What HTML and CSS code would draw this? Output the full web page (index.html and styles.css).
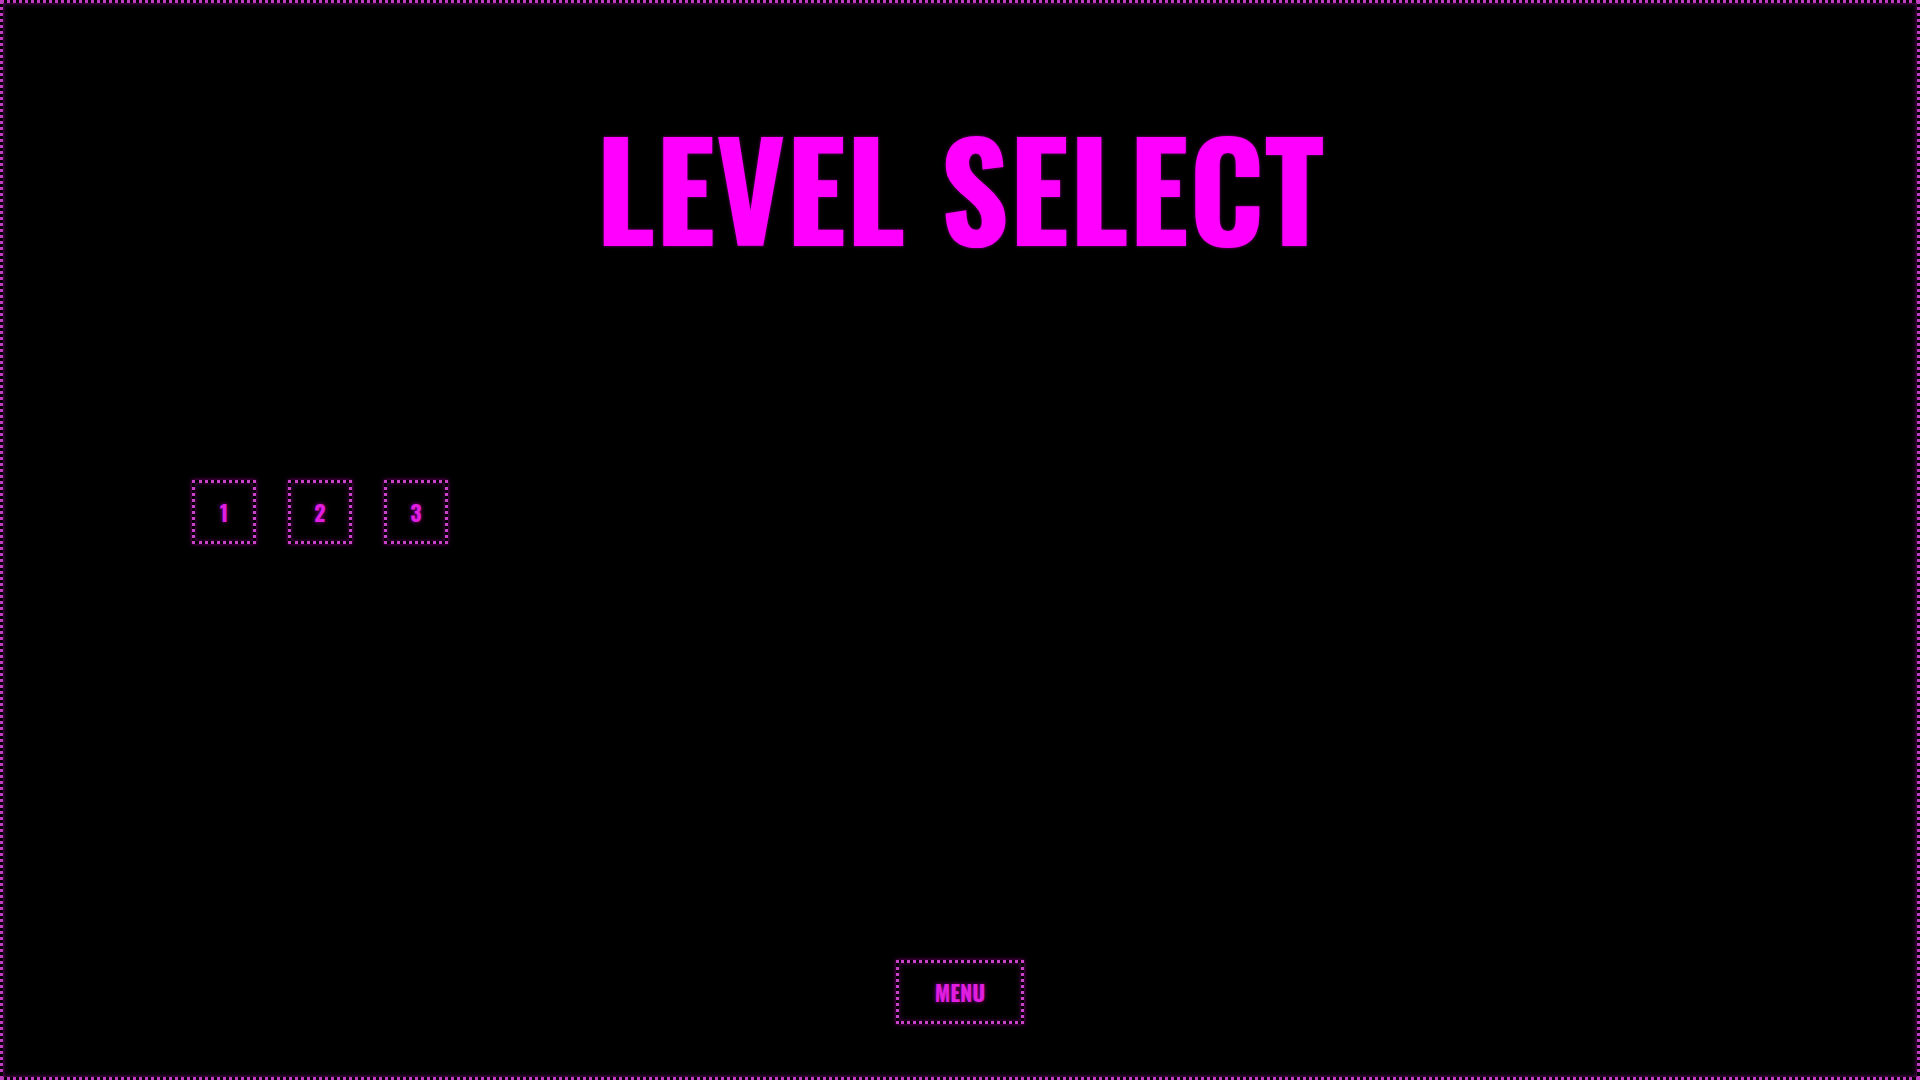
FILE: index.html
```html
<!DOCTYPE html>
<html lang="en">
<head>
<meta charset="utf-8">
<title>Level Select</title>
<link rel="stylesheet" href="styles.css">
</head>
<body>
<main class="screen">
  <h1 class="title">LEVEL SELECT</h1>
  <div class="levels">
    <button class="level">1</button>
    <button class="level">2</button>
    <button class="level">3</button>
  </div>
  <button class="menu">MENU</button>
</main>
</body>
</html>
```

FILE: styles.css
```css
html, body {
  margin: 0;
  padding: 0;
  background: #000;
}

.screen {
  box-sizing: border-box;
  width: 100%;
  height: 1080px;
  border: 3px dotted #c03cc0;
  box-shadow: inset 0 0 4px rgba(255, 0, 255, 0.5);
  display: flex;
  flex-direction: column;
  align-items: center;
  font-family: "Oswald", "Liberation Sans Narrow", "DejaVu Sans Condensed", sans-serif;
  font-weight: 700;
}

.title {
  margin: 0;
  padding-top: 116px;
  font-size: 134.4px;
  line-height: 1;
  font-weight: 700;
  color: #ff00ff;
  text-shadow: 0 0 3px rgba(255, 0, 255, 0.5);
  letter-spacing: 0;
}

.levels {
  align-self: stretch;
  display: flex;
  gap: 32px;
  padding-left: 189px;
  margin-top: 227px;
}

.level,
.menu {
  box-sizing: border-box;
  background: transparent;
  border: 3px dotted #c843c8;
  box-shadow: 0 0 4px rgba(255, 0, 255, 0.5), inset 0 0 4px rgba(255, 0, 255, 0.35);
  color: #e01ee0;
  font-family: inherit;
  font-weight: 700;
  font-size: 22px;
  text-shadow: 0 0 4px rgba(255, 0, 255, 0.6);
  display: flex;
  align-items: center;
  justify-content: center;
  padding: 0;
}

.level {
  width: 64px;
  height: 64px;
}

.menu {
  margin-top: auto;
  margin-bottom: 53px;
  width: 128px;
  height: 64px;
}
```
